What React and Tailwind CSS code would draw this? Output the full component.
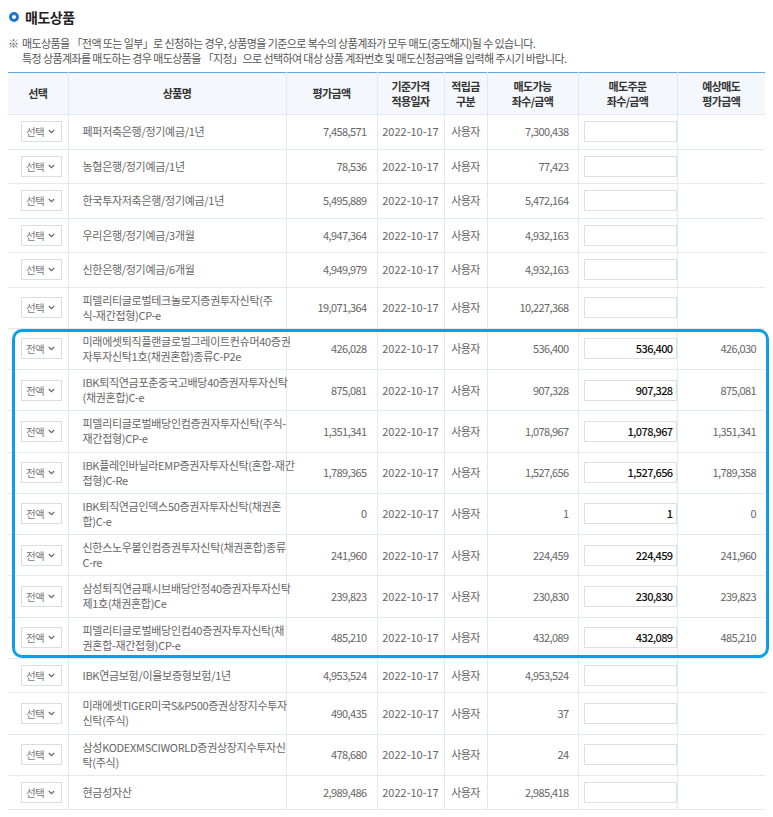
import React from 'react';

const rows = [
  { sel: '선택', name: ['페퍼저축은행/정기예금/1년'], eval: '7,458,571', avail: '7,300,438' },
  { sel: '선택', name: ['농협은행/정기예금/1년'], eval: '78,536', avail: '77,423' },
  { sel: '선택', name: ['한국투자저축은행/정기예금/1년'], eval: '5,495,889', avail: '5,472,164' },
  { sel: '선택', name: ['우리은행/정기예금/3개월'], eval: '4,947,364', avail: '4,932,163' },
  { sel: '선택', name: ['신한은행/정기예금/6개월'], eval: '4,949,979', avail: '4,932,163' },
  { sel: '선택', name: ['피델리티글로벌테크놀로지증권투자신탁(주', '식-재간접형)CP-e'], eval: '19,071,364', avail: '10,227,368' },
  { sel: '전액', name: ['미래에셋퇴직플랜글로벌그레이트컨슈머40증권', '자투자신탁1호(채권혼합)종류C-P2e'], eval: '426,028', avail: '536,400', order: '536,400', est: '426,030' },
  { sel: '전액', name: ['IBK퇴직연금포춘중국고배당40증권자투자신탁', '(채권혼합)C-e'], eval: '875,081', avail: '907,328', order: '907,328', est: '875,081' },
  { sel: '전액', name: ['피델리티글로벌배당인컴증권자투자신탁(주식-', '재간접형)CP-e'], eval: '1,351,341', avail: '1,078,967', order: '1,078,967', est: '1,351,341' },
  { sel: '전액', name: ['IBK플레인바닐라EMP증권자투자신탁(혼합-재간', '접형)C-Re'], eval: '1,789,365', avail: '1,527,656', order: '1,527,656', est: '1,789,358' },
  { sel: '전액', name: ['IBK퇴직연금인덱스50증권자투자신탁(채권혼', '합)C-e'], eval: '0', avail: '1', order: '1', est: '0' },
  { sel: '전액', name: ['신한스노우볼인컴증권투자신탁(채권혼합)종류', 'C-re'], eval: '241,960', avail: '224,459', order: '224,459', est: '241,960' },
  { sel: '전액', name: ['삼성퇴직연금패시브배당안정40증권자투자신탁', '제1호(채권혼합)Ce'], eval: '239,823', avail: '230,830', order: '230,830', est: '239,823' },
  { sel: '전액', name: ['피델리티글로벌배당인컴40증권자투자신탁(채', '권혼합-재간접형)CP-e'], eval: '485,210', avail: '432,089', order: '432,089', est: '485,210' },
  { sel: '선택', name: ['IBK연금보험/이율보증형보험/1년'], eval: '4,953,524', avail: '4,953,524' },
  { sel: '선택', name: ['미래에셋TIGER미국S&P500증권상장지수투자', '신탁(주식)'], eval: '490,435', avail: '37' },
  { sel: '선택', name: ['삼성KODEXMSCIWORLD증권상장지수투자신', '탁(주식)'], eval: '478,680', avail: '24' },
  { sel: '선택', name: ['현금성자산'], eval: '2,989,486', avail: '2,985,418' },
];

const Chevron = () => (
  <svg width="7" height="5" viewBox="0 0 7 5" className="shrink-0">
    <path d="M0.8 1 L3.5 3.7 L6.2 1" fill="none" stroke="#666" strokeWidth="1.2" />
  </svg>
);

const Select = ({ value }) => (
  <div className="flex h-[21px] w-[41px] items-center justify-between border border-[#dadde2] bg-white pl-[4px] pr-[6px] text-[10.5px] text-[#777]">
    <span>{value}</span>
    <Chevron />
  </div>
);

const th = 'h-[42px] border-x border-b border-[#e2e8f0] font-bold text-[#333] align-middle text-center first:border-l-0 last:border-r-0';
const td = 'border border-[#e4e9f0] p-0 align-middle first:border-l-0 last:border-r-0';

export default function App() {
  return (
    <div
      className="min-h-screen bg-white px-[8px] pt-[7px] text-[11px] tracking-[-0.6px] text-[#666]"
      style={{ fontFamily: '"Noto Sans CJK KR", "Noto Sans", sans-serif' }}
    >
      <div className="flex h-[20px] items-center gap-[6px]">
        <span className="ml-[1px] h-[10px] w-[10px] rounded-full border-[3px] border-[#1a78cf]" />
        <h2 className="text-[14px] font-bold leading-[20px] tracking-[-0.5px] text-[#222]">매도상품</h2>
      </div>

      <div className="mt-[9px] flex text-[11px] leading-[15px] text-[#555]">
        <span className="w-[14px] shrink-0">※</span>
        <div>
          <p>매도상품을 「전액 또는 일부」로 신청하는 경우, 상품명을 기준으로 복수의 상품계좌가 모두 매도(중도해지)될 수 있습니다.</p>
          <p>특정 상품계좌를 매도하는 경우 매도상품을 「지정」으로 선택하여 대상 상품 계좌번호 및 매도신청금액을 입력해 주시기 바랍니다.</p>
        </div>
      </div>

      <div className="relative mt-[6px] w-[757px]">
        <table className="w-[757px] table-fixed border-collapse border-t border-t-[#5ea7e3] leading-[15px]">
          <colgroup>
            <col className="w-[60px]" />
            <col className="w-[218px]" />
            <col className="w-[91px]" />
            <col className="w-[67px]" />
            <col className="w-[43px]" />
            <col className="w-[91px]" />
            <col className="w-[99px]" />
            <col className="w-[88px]" />
          </colgroup>
          <thead className="bg-[#f4f7fb]">
            <tr className="h-[42px]">
              <th className={th}>선택</th>
              <th className={th}>상품명</th>
              <th className={th}>평가금액</th>
              <th className={th}>기준가격<br />적용일자</th>
              <th className={th}>적립금<br />구분</th>
              <th className={th}>매도가능<br />좌수/금액</th>
              <th className={th}>매도주문<br />좌수/금액</th>
              <th className={th}>예상매도<br />평가금액</th>
            </tr>
          </thead>
          <tbody>
            {rows.map((r, i) => (
              <tr key={i} className={r.name.length > 1 ? 'h-[41.25px]' : 'h-[34.5px]'}>
                <td className={`${td} pl-[13px]`}>
                  <Select value={r.sel} />
                </td>
                <td className={`${td} pl-[14px] pr-[2px] whitespace-nowrap tracking-[-0.3px]`}>
                  {r.name.map((l, j) => (
                    <div key={j}>{l}</div>
                  ))}
                </td>
                <td className={`${td} pr-[10px] text-right`}>{r.eval}</td>
                <td className={`${td} text-center tracking-[0px]`}>2022-10-17</td>
                <td className={`${td} text-center`}>사용자</td>
                <td className={`${td} pr-[9px] text-right`}>{r.avail}</td>
                <td className={`${td} pl-[5px]`}>
                  <div className="flex h-[21px] w-[93px] items-center justify-end border border-[#dcdfe4] bg-white pr-[3px] text-[11px] font-medium text-[#111]">
                    {r.order || ''}
                  </div>
                </td>
                <td className={`${td} pr-[9px] text-right`}>{r.est || ''}</td>
              </tr>
            ))}
          </tbody>
        </table>
        <div className="pointer-events-none absolute left-[4px] top-[257px] h-[329px] w-[757px] rounded-[10px] border-[3px] border-[#0aa0e8]" />
      </div>
    </div>
  );
}
